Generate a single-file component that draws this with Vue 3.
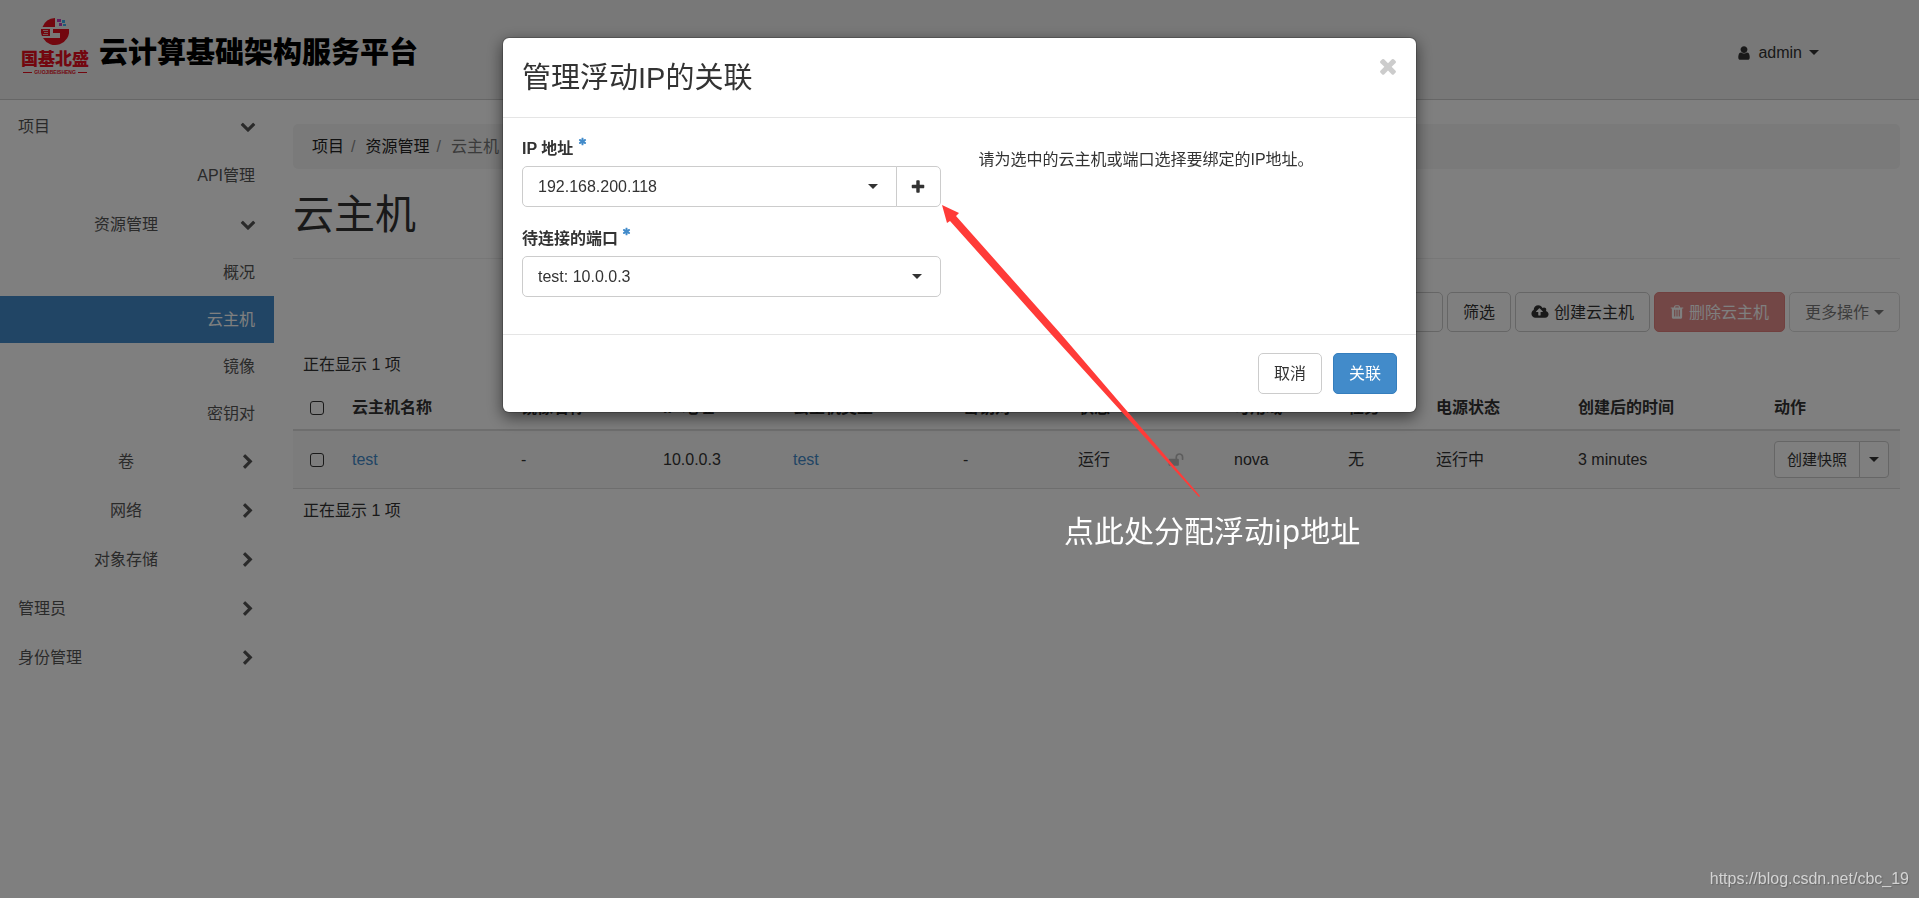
<template>
  <div class="page">
    <header class="navbar">
      <a href="#" class="brand">
        <span class="logo">
          <svg class="logo-mark" viewBox="0 0 28 28" aria-hidden="true">
            <path d="M14 0v9H1.500A14 14 0 0 1 14 0z" fill="#e60f1e" />
            <path d="M0 11h9v7H1a14 14 0 0 1-1-7z" fill="#e60f1e" />
            <path d="M2 12.500h5M3 14.500h4M2 16.500h5" stroke="#f0b0b0" fill="none" />
            <path d="M12 11h16a14 14 0 0 1-26 9h17v-5h-7z" fill="#e60f1e" />
            <path d="M16 1h4v3h-4zM18 5h3v3h-3z" fill="#c040c0" />
            <path d="M21 2h3v3h-3zM22 6h3v2h-3z" fill="#40b0f0" />
          </svg>
          <span class="logo-name">国基北盛</span>
          <span class="logo-sub">GUOJIBEISHENG</span>
        </span>
        <span class="brand-title">云计算基础架构服务平台</span>
      </a>
      <button type="button" class="user-menu">
        <Icon name="user" />
        <span>admin</span>
        <span class="caret"></span>
      </button>
    </header>

    <div class="wrapper">
      <nav class="sidebar">
        <template v-for="item in menu" :key="item.label">
          <a v-if="item.leaf" href="#" class="leaf" :class="{ active: item.active, tall: item.tall }">{{ item.label }}</a>
          <button v-else type="button" class="group" :class="{ nested: item.nested }">
            <span class="group-label">{{ item.label }}</span>
            <Icon :name="item.open ? 'down' : 'right'" />
          </button>
        </template>
      </nav>

      <main class="content">
        <ol class="breadcrumb">
          <li><a href="#">项目</a></li>
          <li><a href="#">资源管理</a></li>
          <li class="current">云主机</li>
        </ol>

        <h1>云主机</h1>

        <div class="toolbar">
          <input v-model="keyword" type="text" class="filter-input" aria-label="筛选" />
          <button type="button" class="btn">筛选</button>
          <button type="button" class="btn"><Icon name="cloud" />创建云主机</button>
          <button type="button" class="btn danger" disabled><Icon name="trash" />删除云主机</button>
          <button type="button" class="btn" disabled>更多操作<span class="caret"></span></button>
        </div>

        <div class="count">正在显示 1 项</div>
        <table>
          <thead>
            <tr>
              <th><input type="checkbox" aria-label="全选" /></th>
              <th v-for="(col, i) in columns" :key="i">{{ col }}</th>
            </tr>
          </thead>
          <tbody>
            <tr>
              <td><input type="checkbox" aria-label="test" /></td>
              <td><a href="#">test</a></td>
              <td>-</td>
              <td>10.0.0.3</td>
              <td><a href="#">test</a></td>
              <td>-</td>
              <td>运行</td>
              <td><Icon name="unlock" class="muted" /></td>
              <td>nova</td>
              <td>无</td>
              <td>运行中</td>
              <td>3 minutes</td>
              <td>
                <div class="btn-group">
                  <button type="button" class="btn small">创建快照</button>
                  <button type="button" class="btn small" aria-label="更多"><span class="caret"></span></button>
                </div>
              </td>
            </tr>
          </tbody>
        </table>
        <div class="count">正在显示 1 项</div>
      </main>
    </div>

    <div class="backdrop">
      <form class="modal" role="dialog" aria-labelledby="modal-title" @submit.prevent>
        <div class="modal-header">
          <h3 id="modal-title">管理浮动IP的关联</h3>
          <button type="button" class="close" aria-label="关闭"><Icon name="times" /></button>
        </div>
        <div class="modal-body">
          <div class="fields">
            <div class="field">
              <label for="ip">IP 地址 <Icon name="asterisk" class="required" /></label>
              <div class="input-group">
                <div class="select-box">
                  <select id="ip" v-model="ip">
                    <option>192.168.200.118</option>
                  </select>
                  <span class="caret"></span>
                </div>
                <button type="button" class="addon" aria-label="分配"><Icon name="plus" /></button>
              </div>
            </div>
            <div class="field">
              <label for="port">待连接的端口 <Icon name="asterisk" class="required" /></label>
              <div class="select-box">
                <select id="port" v-model="port">
                  <option>test: 10.0.0.3</option>
                </select>
                <span class="caret"></span>
              </div>
            </div>
          </div>
          <p class="help">请为选中的云主机或端口选择要绑定的IP地址。</p>
        </div>
        <div class="modal-footer">
          <button type="button" class="btn">取消</button>
          <button type="submit" class="btn primary">关联</button>
        </div>

        <!-- pointer to the allocate button -->
        <svg class="arrow" viewBox="0 0 260 294" aria-hidden="true">
          <polygon points="0,0 17,8 14,11 118,128 258,291 257,292 109,129 8,16 5,18" fill="#ff3b38" />
        </svg>
        <p class="note">点此处分配浮动ip地址</p>
      </form>
    </div>

    <div class="watermark">https://blog.csdn.net/cbc_19</div>
  </div>
</template>

<script setup>
import { h, ref } from 'vue'

const paths = {
  down: 'M1683 808l-742 741q-19 19-45 19t-45-19l-742-741q-19-19-19-45.500t19-45.500l166-165q19-19 45-19t45 19l531 531 531-531q19-19 45-19t45 19l166 165q19 19 19 45.500t-19 45.500z',
  right: 'M1363 877l-742 742q-19 19-45 19t-45-19l-166-166q-19-19-19-45t19-45l531-531-531-531q-19-19-19-45t19-45l166-166q19-19 45-19t45 19l742 742q19 19 19 45t-19 45z',
  times: 'M1490 1322q0 40-28 68l-136 136q-28 28-68 28t-68-28l-294-294-294 294q-28 28-68 28t-68-28l-136-136q-28-28-28-68t28-68l294-294-294-294q-28-28-28-68t28-68l136-136q28-28 68-28t68 28l294 294 294-294q28-28 68-28t68 28l136 136q28 28 28 68t-28 68l-294 294 294 294q28 28 28 68z',
  plus: 'M1600 736v192q0 40-28 68t-68 28h-416v416q0 40-28 68t-68 28h-192q-40 0-68-28t-28-68v-416h-416q-40 0-68-28t-28-68v-192q0-40 28-68t68-28h416v-416q0-40 28-68t68-28h192q40 0 68 28t28 68v416h416q40 0 68 28t28 68z',
  asterisk: 'M1546 1050q46 26 59.500 77.500t-12.500 97.500l-64 110q-26 46-77.500 59.500t-97.500-12.500l-266-153v307q0 52-38 90t-90 38h-128q-52 0-90-38t-38-90v-307l-266 153q-46 26-97.500 12.500t-77.500-59.500l-64-110q-26-46-12.500-97.500t59.500-77.500l266-154-266-154q-46-26-59.500-77.500t12.500-97.500l64-110q26-46 77.500-59.500t97.500 12.500l266 153v-307q0-52 38-90t90-38h128q52 0 90 38t38 90v307l266-153q46-26 97.500-12.500t77.500 59.500l64 110q26 46 12.500 97.500t-59.500 77.500l-266 154z',
  user: 'M1536 1399q0 109-62.500 187t-150.500 78h-854q-88 0-150.500-78t-62.500-187q0-85 8.500-160.500t31.500-152 58.500-131 94-89 134.500-34.500q131 128 313 128t313-128q76 0 134.500 34.500t94 89 58.500 131 31.500 152 8.500 160.500zm-256-887q0 159-112.500 271.500t-271.500 112.500-271.500-112.500-112.500-271.500 112.500-271.500 271.500-112.500 271.500 112.500 112.500 271.500z',
  cloud: 'M1216 864q0-14-9-23l-352-352q-9-9-23-9t-23 9l-351 351q-10 12-10 24 0 14 9 23t23 9h224v352q0 13 9.500 22.500t22.500 9.500h192q13 0 22.500-9.500t9.500-22.500v-352h224q13 0 22.500-9.500t9.500-22.500zm640 288q0 159-112.500 271.500t-271.500 112.500h-1088q-185 0-316.500-131.500t-131.500-316.500q0-130 70-240t188-165q-2-30-2-43 0-212 150-362t362-150q156 0 285.500 87t188.500 231q71-62 166-62 106 0 181 75t75 181q0 76-41 138 130 31 213.500 135.500t83.500 238.500z',
  trash: 'M704 1376v-704q0-14-9-23t-23-9h-64q-14 0-23 9t-9 23v704q0 14 9 23t23 9h64q14 0 23-9t9-23zm256 0v-704q0-14-9-23t-23-9h-64q-14 0-23 9t-9 23v704q0 14 9 23t23 9h64q14 0 23-9t9-23zm256 0v-704q0-14-9-23t-23-9h-64q-14 0-23 9t-9 23v704q0 14 9 23t23 9h64q14 0 23-9t9-23zm-544-992h448l-48-117q-7-9-17-11h-317q-10 2-17 11zm928 32v64q0 14-9 23t-23 9h-96v948q0 83-47 143.500t-113 60.500h-832q-66 0-113-58.500t-47-141.500v-952h-96q-14 0-23-9t-9-23v-64q0-14 9-23t23-9h309l70-167q15-37 54-63t79-26h320q40 0 79 26t54 63l70 167h309q14 0 23 9t9 23z',
  unlock: 'M1728 576v256q0 26-19 45t-45 19h-64q-26 0-45-19t-19-45v-256q0-106-75-181t-181-75-181 75-75 181v192h96q40 0 68 28t28 68v576q0 40-28 68t-68 28h-960q-40 0-68-28t-28-68v-576q0-40 28-68t68-28h672v-192q0-185 131.500-316.500t316.500-131.500 316.500 131.500 131.500 316.500z'
}

const boxes = {
  user: '192 0 1408 1792',
  trash: '192 0 1408 1792',
  cloud: '-64 0 1920 1792',
  down: '0 112 1792 1792'
}
const widths = { user: 14, trash: 14, cloud: 18 }

const Icon = ({ name }) =>
  h('svg', { class: 'icon', viewBox: boxes[name] || '0 0 1792 1792', width: widths[name] || 16, height: 16, 'aria-hidden': 'true' }, [
    h('path', { d: paths[name] })
  ])
Icon.props = ['name']

const keyword = ref('')
const ip = ref('192.168.200.118')
const port = ref('test: 10.0.0.3')

const menu = [
  { label: '项目', open: true },
  { label: 'API管理', leaf: true, tall: true },
  { label: '资源管理', nested: true, open: true },
  { label: '概况', leaf: true },
  { label: '云主机', leaf: true, active: true },
  { label: '镜像', leaf: true },
  { label: '密钥对', leaf: true },
  { label: '卷', nested: true },
  { label: '网络', nested: true },
  { label: '对象存储', nested: true },
  { label: '管理员' },
  { label: '身份管理' }
]

const columns = ['云主机名称', '镜像名称', 'IP 地址', '云主机类型', '密钥对', '状态', '', '可用域', '任务', '电源状态', '创建后的时间', '动作']
</script>

<style>
body {
  margin: 0;
  background: #fff;
}
</style>

<style scoped>
.page {
  min-height: 100vh;
  font-family: 'Liberation Sans', 'Noto Sans CJK SC', sans-serif;
  font-size: 16px;
  line-height: 23px;
  color: #333;
}

.page * {
  box-sizing: border-box;
}

button,
input,
select {
  font: inherit;
  color: inherit;
  margin: 0;
}

button {
  cursor: pointer;
}

a {
  color: #428bca;
  text-decoration: none;
}

.icon {
  display: inline-block;
  flex: none;
  fill: currentColor;
}

.caret {
  display: inline-block;
  flex: none;
  border: 5px solid transparent;
  border-top-color: currentColor;
  border-bottom: 0;
}

.navbar {
  display: flex;
  align-items: center;
  justify-content: space-between;
  height: 100px;
  padding: 0 100px 0 21px;
  background: #f0f0f0;
  border-bottom: 1px solid #ccc;
}

.brand {
  display: flex;
  align-items: center;
  gap: 10px;
}

.logo {
  display: flex;
  flex-direction: column;
  align-items: center;
  margin-bottom: 6px;
  color: #e60f1e;
  font-weight: 900;
}

.logo-mark {
  width: 28px;
  height: 28px;
}

.logo-name {
  font-size: 17px;
  line-height: 20px;
  margin-top: 4px;
}

.logo-sub {
  display: flex;
  align-items: center;
  gap: 2px;
  font-size: 5px;
  line-height: 5px;
}

.logo-sub::before,
.logo-sub::after {
  content: '';
  width: 9px;
  height: 1px;
  background: #e60f1e;
}

.brand-title {
  font-size: 29px;
  line-height: 40px;
  margin-top: 6px;
  font-weight: 900;
  color: #000;
}

.user-menu {
  display: flex;
  align-items: center;
  gap: 7px;
  margin-top: 6px;
  padding: 0;
  border: 0;
  background: none;
}

.wrapper {
  display: flex;
}

.sidebar {
  flex: none;
  width: 274px;
  padding-top: 2px;
  color: #555;
}

.group {
  display: flex;
  align-items: center;
  width: 100%;
  height: 49px;
  padding: 0 18px;
  border: 0;
  background: none;
  text-align: left;
}

.group-label {
  flex: 1;
}

.nested .group-label {
  padding-right: 6px;
  text-align: center;
}

.leaf {
  display: block;
  padding: 12px 19px;
  text-align: right;
  color: #555;
}

.leaf.tall {
  padding: 13px 19px;
}

.leaf.active {
  background: #428bca;
  color: #fff;
}

.content {
  flex: 1;
  min-width: 0;
  padding: 24px 19px 0;
}

.breadcrumb {
  display: flex;
  margin: 0;
  padding: 11px 19px;
  list-style: none;
  border-radius: 5px;
  background: #f5f5f5;
}

.breadcrumb a {
  color: #222;
}

.breadcrumb li + li::before {
  content: '/';
  padding: 0 10px 0 7px;
  color: #888;
}

.breadcrumb .current {
  color: #777;
}

h1 {
  margin: 24px 0 33px;
  padding-bottom: 20px;
  border-bottom: 1px solid #eee;
  font-size: 41px;
  line-height: 45px;
  font-weight: 400;
}

.toolbar {
  display: flex;
  justify-content: flex-end;
  gap: 4px;
  margin-bottom: 11px;
}

.filter-input {
  width: 200px;
  height: 40px;
  padding: 0 14px;
  border: 1px solid #ccc;
  border-radius: 5px;
  background: #fff;
}

.btn {
  display: inline-flex;
  align-items: center;
  justify-content: center;
  gap: 5px;
  height: 40px;
  padding: 0 15px;
  border: 1px solid #ccc;
  border-radius: 5px;
  background: #fff;
}

.btn:disabled {
  opacity: 0.65;
}

.btn.danger {
  border-color: #d43f3a;
  background: #d9534f;
  color: #fff;
}

.btn.primary {
  border-color: #357ebd;
  background: #428bca;
  color: #fff;
}

.count {
  padding: 10px;
}

table {
  width: 100%;
  table-layout: fixed;
  border-spacing: 0;
}

th,
td {
  padding: 10px;
  text-align: left;
}

th {
  border-bottom: 2px solid #ddd;
}

td {
  background: #f9f9f9;
  border-bottom: 1px solid #ddd;
}

th:first-child,
td:first-child {
  padding-left: 17px;
}

th:nth-child(1) { width: 49px; }
th:nth-child(2) { width: 169px; }
th:nth-child(3) { width: 142px; }
th:nth-child(4) { width: 130px; }
th:nth-child(5) { width: 170px; }
th:nth-child(6) { width: 115px; }
th:nth-child(7) { width: 90px; }
th:nth-child(8) { width: 66px; }
th:nth-child(9) { width: 114px; }
th:nth-child(10) { width: 88px; }
th:nth-child(11) { width: 142px; }
th:nth-child(12) { width: 196px; }
th:nth-child(13) { width: 136px; }

input[type='checkbox'] {
  display: block;
  appearance: none;
  width: 14px;
  height: 14px;
  border: 1px solid #333;
  border-radius: 3px;
}

.muted {
  display: block;
  color: #bbb;
}

.btn-group {
  display: flex;
}

.btn.small {
  height: 37px;
  padding: 0 12px;
  font-size: 15px;
}

.btn-group .btn:first-child {
  border-radius: 4px 0 0 4px;
}

.btn-group .btn:last-child {
  margin-left: -1px;
  padding: 0 9px;
  border-radius: 0 4px 4px 0;
}

.backdrop {
  position: fixed;
  inset: 0;
  padding-top: 37px;
  background: rgba(0, 0, 0, 0.5);
}

.modal {
  position: relative;
  width: 915px;
  max-width: 100%;
  margin: 0 auto;
  border: 1px solid rgba(0, 0, 0, 0.2);
  border-radius: 7px;
  background: #fff;
  background-clip: padding-box;
  box-shadow: 0 5px 15px rgba(0, 0, 0, 0.5);
}

.modal-header {
  display: flex;
  align-items: flex-start;
  justify-content: space-between;
  padding: 20px 19px 18px;
  border-bottom: 1px solid #e5e5e5;
}

h3 {
  margin: 0;
  font-size: 29px;
  line-height: 41px;
  font-weight: 400;
}

.close {
  display: flex;
  padding: 0;
  border: 0;
  background: none;
  color: #ccc;
}

.close .icon {
  width: 24px;
  height: 24px;
  margin: -4px -3px;
}

.modal-body {
  display: grid;
  grid-template-columns: 1fr 1fr;
  gap: 38px;
  padding: 19px 19px 37px;
}

.field + .field {
  margin-top: 20px;
}

label {
  display: block;
  margin-bottom: 6px;
  font-weight: 700;
}

.required {
  width: 9px;
  height: 9px;
  color: #428bca;
  vertical-align: 8px;
}

.input-group {
  display: flex;
}

.select-box {
  position: relative;
  flex: 1;
}

.select-box .caret {
  position: absolute;
  right: 19px;
  top: 18px;
  pointer-events: none;
}

select {
  display: block;
  appearance: none;
  width: 100%;
  height: 41px;
  padding: 0 15px;
  border: 1px solid #ccc;
  border-radius: 5px;
  background: #fff;
}

.input-group select {
  border-radius: 5px 0 0 5px;
}

.addon {
  display: flex;
  align-items: center;
  justify-content: center;
  width: 45px;
  margin-left: -1px;
  padding: 0;
  border: 1px solid #ccc;
  border-radius: 0 5px 5px 0;
  background: #fff;
}

.help {
  margin: 11px 0 0;
}

.modal-footer {
  display: flex;
  justify-content: flex-end;
  gap: 11px;
  padding: 18px 19px;
  border-top: 1px solid #e5e5e5;
}

.modal-footer .btn {
  height: 41px;
}

.arrow {
  position: absolute;
  left: 439px;
  top: 167px;
  width: 260px;
  height: 294px;
  pointer-events: none;
}

.note {
  position: absolute;
  left: 561px;
  top: 472px;
  margin: 0;
  font-family: 'Noto Sans', 'Noto Sans CJK SC', sans-serif;
  font-size: 30px;
  line-height: 42px;
  color: #fff;
  white-space: nowrap;
}

.watermark {
  position: fixed;
  right: 10px;
  bottom: 8px;
  color: #d4d4d4;
  text-shadow: 1px 1px 1px #666;
}
</style>
